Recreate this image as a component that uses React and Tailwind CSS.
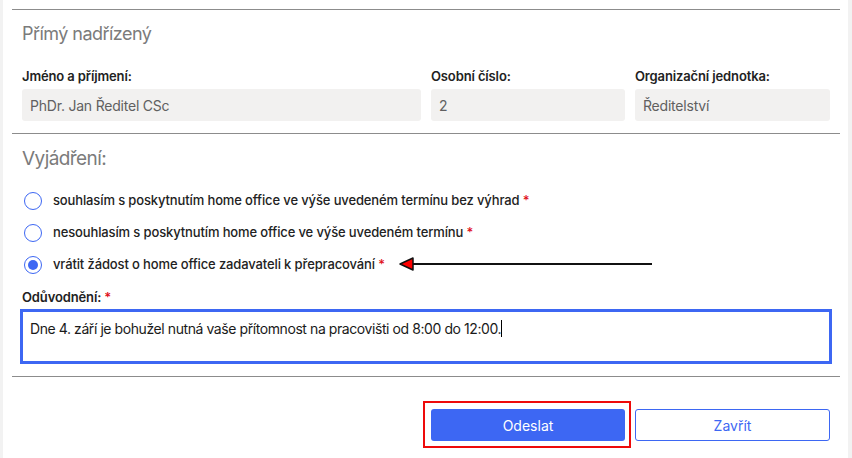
import React from 'react';

const options = [
  { label: 'souhlasím s poskytnutím home office ve výše uvedeném termínu bez výhrad', checked: false },
  { label: 'nesouhlasím s poskytnutím home office ve výše uvedeném termínu', checked: false },
  { label: 'vrátit žádost o home office zadavateli k přepracování', checked: true },
];

function Radio({ checked }) {
  return (
    <span className="w-[18px] h-[18px] rounded-full border-[1.3px] border-[#3d67f3] flex items-center justify-center shrink-0 bg-white">
      {checked && <span className="w-[10px] h-[10px] rounded-full bg-[#3d67f3]" />}
    </span>
  );
}

function Field({ label, value }) {
  return (
    <div>
      <div className="text-[13px] leading-4 font-semibold tracking-[-0.01em] text-[#222]">{label}</div>
      <div className="mt-[5px] h-[32px] rounded-[3px] bg-[#f2f1f0] px-[8px] flex items-center text-[14px] tracking-[-0.015em] text-[#606060]">
        {value}
      </div>
    </div>
  );
}

export default function App() {
  return (
    <div className="w-[852px] h-[458px] bg-[#f2f2f2] flex font-['Inter',sans-serif] overflow-hidden">
      <div className="ml-[3px] w-[845px] h-full bg-white relative pt-[9px] pl-[9px] pr-[8px]">
        <div className="border-t border-[#8c8c8c]" />

        {/* Přímý nadřízený */}
        <div className="px-[10px]">
          <h2 className="mt-[12px] text-[18px] leading-6 tracking-[-0.03em] text-[#7b7b7b]">Přímý nadřízený</h2>
          <div className="mt-[22px] grid grid-cols-[399px_194px_1fr] gap-x-[10px]">
            <Field label="Jméno a příjmení:" value="PhDr. Jan Ředitel CSc" />
            <Field label="Osobní číslo:" value="2" />
            <Field label="Organizační jednotka:" value="Ředitelství" />
          </div>
        </div>

        <div className="mt-[12px] border-t border-[#8c8c8c]" />

        {/* Vyjádření */}
        <div className="px-[10px]">
          <h2 className="mt-[13px] text-[19px] leading-6 tracking-[-0.03em] text-[#7b7b7b]">Vyjádření:</h2>
          <div className="mt-[20px] flex flex-col gap-[12px]">
            {options.map((o) => (
              <div key={o.label} className="h-[20px] flex items-center gap-[11px] pl-[2px]">
                <Radio checked={o.checked} />
                <span className="text-[13px] font-medium tracking-[-0.01em] text-[#222]">
                  {o.label} <span className="text-[#e0101a]">*</span>
                </span>
              </div>
            ))}
          </div>

          <div className="mt-[14px] text-[13px] leading-4 font-semibold tracking-[-0.01em] text-[#222]">
            Odůvodnění: <span className="text-[#e0101a]">*</span>
          </div>
          <div className="mt-[4px] -mx-[2px] h-[55px] border-[3px] border-[#3d67f3] px-[7px] pt-[6px] text-[14px] tracking-[-0.03em] text-[#1a1a1a]">
            Dne 4. září je bohužel nutná vaše přítomnost na pracovišti od 8:00 do 12:00.
            <span className="inline-block w-px h-[17px] bg-black align-[-3px]" />
          </div>
        </div>

        <div className="mt-[12px] border-t border-[#8c8c8c]" />

        {/* Tlačítka */}
        <div className="px-[10px] mt-[32px] grid grid-cols-[399px_194px_1fr] gap-x-[10px]">
          <div />
          <div className="relative">
            <span className="absolute -left-[8px] -right-[6px] -top-[8px] -bottom-[7px] border-2 border-[#ee0a0a]" />
            <button className="relative w-full h-[32px] rounded-[3px] bg-[#3d67f3] text-white text-[14px]">
              Odeslat
            </button>
          </div>
          <button className="h-[32px] rounded-[3px] border border-[#3d67f3] bg-white text-[#3d67f3] text-[14px]">
            Zavřít
          </button>
        </div>

        {/* šipka */}
        <svg className="absolute left-[394px] top-[256px]" width="262" height="16" viewBox="0 0 262 16">
          <line x1="16" y1="8" x2="255" y2="8" stroke="#111" strokeWidth="2" />
          <polygon points="3,8 16,2 16,14" fill="#f00" stroke="#111" strokeWidth="1.5" strokeLinejoin="round" />
        </svg>
      </div>
    </div>
  );
}
